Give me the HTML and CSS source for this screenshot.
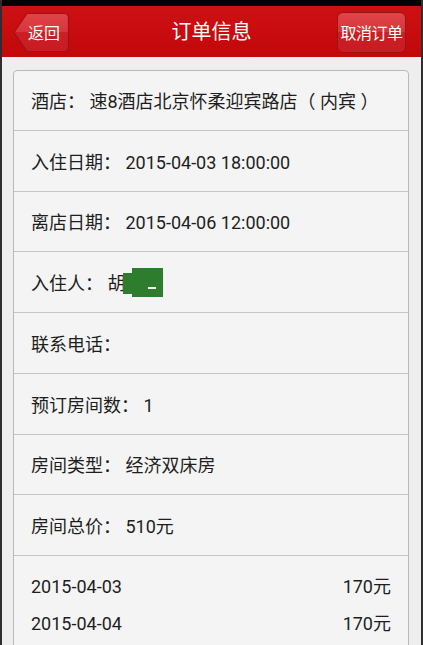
FILE: index.html
```html
<!DOCTYPE html>
<html lang="zh">
<head>
<meta charset="utf-8">
<link rel="stylesheet" href="styles.css">
</head>
<body>
<div class="screen">
  <div class="statusbar"></div>
  <header class="topbar">
    <a class="btn-back">
      <svg class="back-shape" width="57" height="41" viewBox="0 0 57 41">
        <defs>
          <linearGradient id="g1" x1="0" y1="0" x2="0" y2="1">
            <stop offset="0" stop-color="#e04448"/>
            <stop offset="0.5" stop-color="#d8343a"/>
            <stop offset="0.5" stop-color="#cc1f25"/>
            <stop offset="1" stop-color="#c81c22"/>
          </linearGradient>
        </defs>
        <path d="M1 20.5 L14 1.5 L51 1.5 Q55.5 1.5 55.5 6 L55.5 35 Q55.5 39.5 51 39.5 L14 39.5 Z" fill="url(#g1)" stroke="#9e1216" stroke-width="1.2"/>
      </svg>
      <span class="back-label">返回</span>
    </a>
    <h1 class="title">订单信息</h1>
    <a class="btn-cancel">取消订单</a>
  </header>
  <main class="content">
    <section class="card">
      <div class="row">酒店： 速8酒店北京怀柔迎宾路店（ 内宾 ）</div>
      <div class="row">入住日期： 2015-04-03 18:00:00</div>
      <div class="row short">离店日期： 2015-04-06 12:00:00</div>
      <div class="row">入住人： <span class="name">胡</span><span class="mask"><span class="mask-dash"></span></span></div>
      <div class="row">联系电话：</div>
      <div class="row">预订房间数： 1</div>
      <div class="row short">房间类型： 经济双床房</div>
      <div class="row">房间总价： 510元</div>
      <div class="daylist">
        <div class="day"><span>2015-04-03</span><span>170元</span></div>
        <div class="day"><span>2015-04-04</span><span>170元</span></div>
      </div>
    </section>
  </main>
</div>
</body>
</html>
```
FILE: styles.css
```css
* { box-sizing: border-box; margin: 0; padding: 0; }
html, body { width: 423px; height: 645px; overflow: hidden; }
body {
  background: #2e2e2e;
  font-family: Roboto, "Noto Sans CJK SC", sans-serif;
  color: #1e1e1e;
}
.screen {
  height: 645px;
  margin: 0 2px;
  background: #eeeeee;
  display: flex;
  flex-direction: column;
  overflow: hidden;
}
.statusbar { height: 6px; background: #000; flex: none; }
.topbar {
  height: 51px;
  flex: none;
  background: #c70b0e;
  background-image: linear-gradient(#cd1013, #c2080b);
  display: flex;
  align-items: center;
  justify-content: space-between;
  padding: 0 15px 0 11px;
  position: relative;
}
.btn-back {
  position: relative;
  width: 57px;
  height: 41px;
  margin-top: 1px;
  display: block;
}
.back-shape { position: absolute; left: 0; top: 0; }
.back-label {
  position: absolute;
  left: 15px;
  top: 0;
  height: 41px;
  line-height: 40px;
  color: #fff;
  font-size: 16px;
  font-family: "Noto Sans CJK SC", sans-serif;
}
.title {
  position: absolute;
  left: 0;
  right: 0;
  top: 0;
  height: 51px;
  line-height: 50px;
  text-align: center;
  color: #fff;
  font-size: 20px;
  font-weight: normal;
  font-family: "Noto Sans CJK SC", sans-serif;
  pointer-events: none;
}
.btn-cancel {
  width: 69px;
  height: 41px;
  margin-top: 1px;
  border-radius: 6px;
  border: 1px solid #9e1216;
  background: linear-gradient(#e04448 0%, #d8343a 50%, #cc1f25 50%, #c81c22 100%);
  color: #fff;
  font-size: 16px;
  font-family: "Noto Sans CJK SC", sans-serif;
  display: flex;
  align-items: center;
  justify-content: center;
  letter-spacing: -0.5px;
  position: relative;
  z-index: 1;
}
.content {
  flex: 1;
  padding: 13px 12px 0 11px;
}
.card {
  background: #f4f4f4;
  border: 1px solid #b9b9b9;
  border-radius: 4px;
}
.row {
  height: 61px;
  border-bottom: 1px solid #c4c4c4;
  display: flex;
  align-items: center;
  padding-left: 17px;
  font-size: 18px;
  padding-bottom: 1px;
  white-space: pre;
}
.row:first-child { height: 60px; }
.row.short { height: 60px; }
.name { display: inline-block; }
.mask {
  display: inline-block;
  position: relative;
  width: 40px;
  height: 29px;
  margin-left: -2px;
  margin-top: 2px;
}
.mask::before {
  content: "";
  position: absolute;
  left: 0;
  top: 5px;
  width: 10px;
  height: 21px;
  background: #2e7d2e;
}
.mask::after {
  content: "";
  position: absolute;
  left: 9px;
  top: 0;
  width: 31px;
  height: 29px;
  background: #2e7d2e;
}
.mask-dash {
  position: absolute;
  z-index: 1;
  left: 25px;
  top: 19px;
  width: 8px;
  height: 2px;
  background: #f0f0f0;
}
.daylist {
  padding: 20px 17px 0 17px;
  display: flex;
  flex-direction: column;
  gap: 15px;
  height: 100px;
}
.day {
  display: flex;
  justify-content: space-between;
  font-size: 18px;
  line-height: 22px;
}
```
